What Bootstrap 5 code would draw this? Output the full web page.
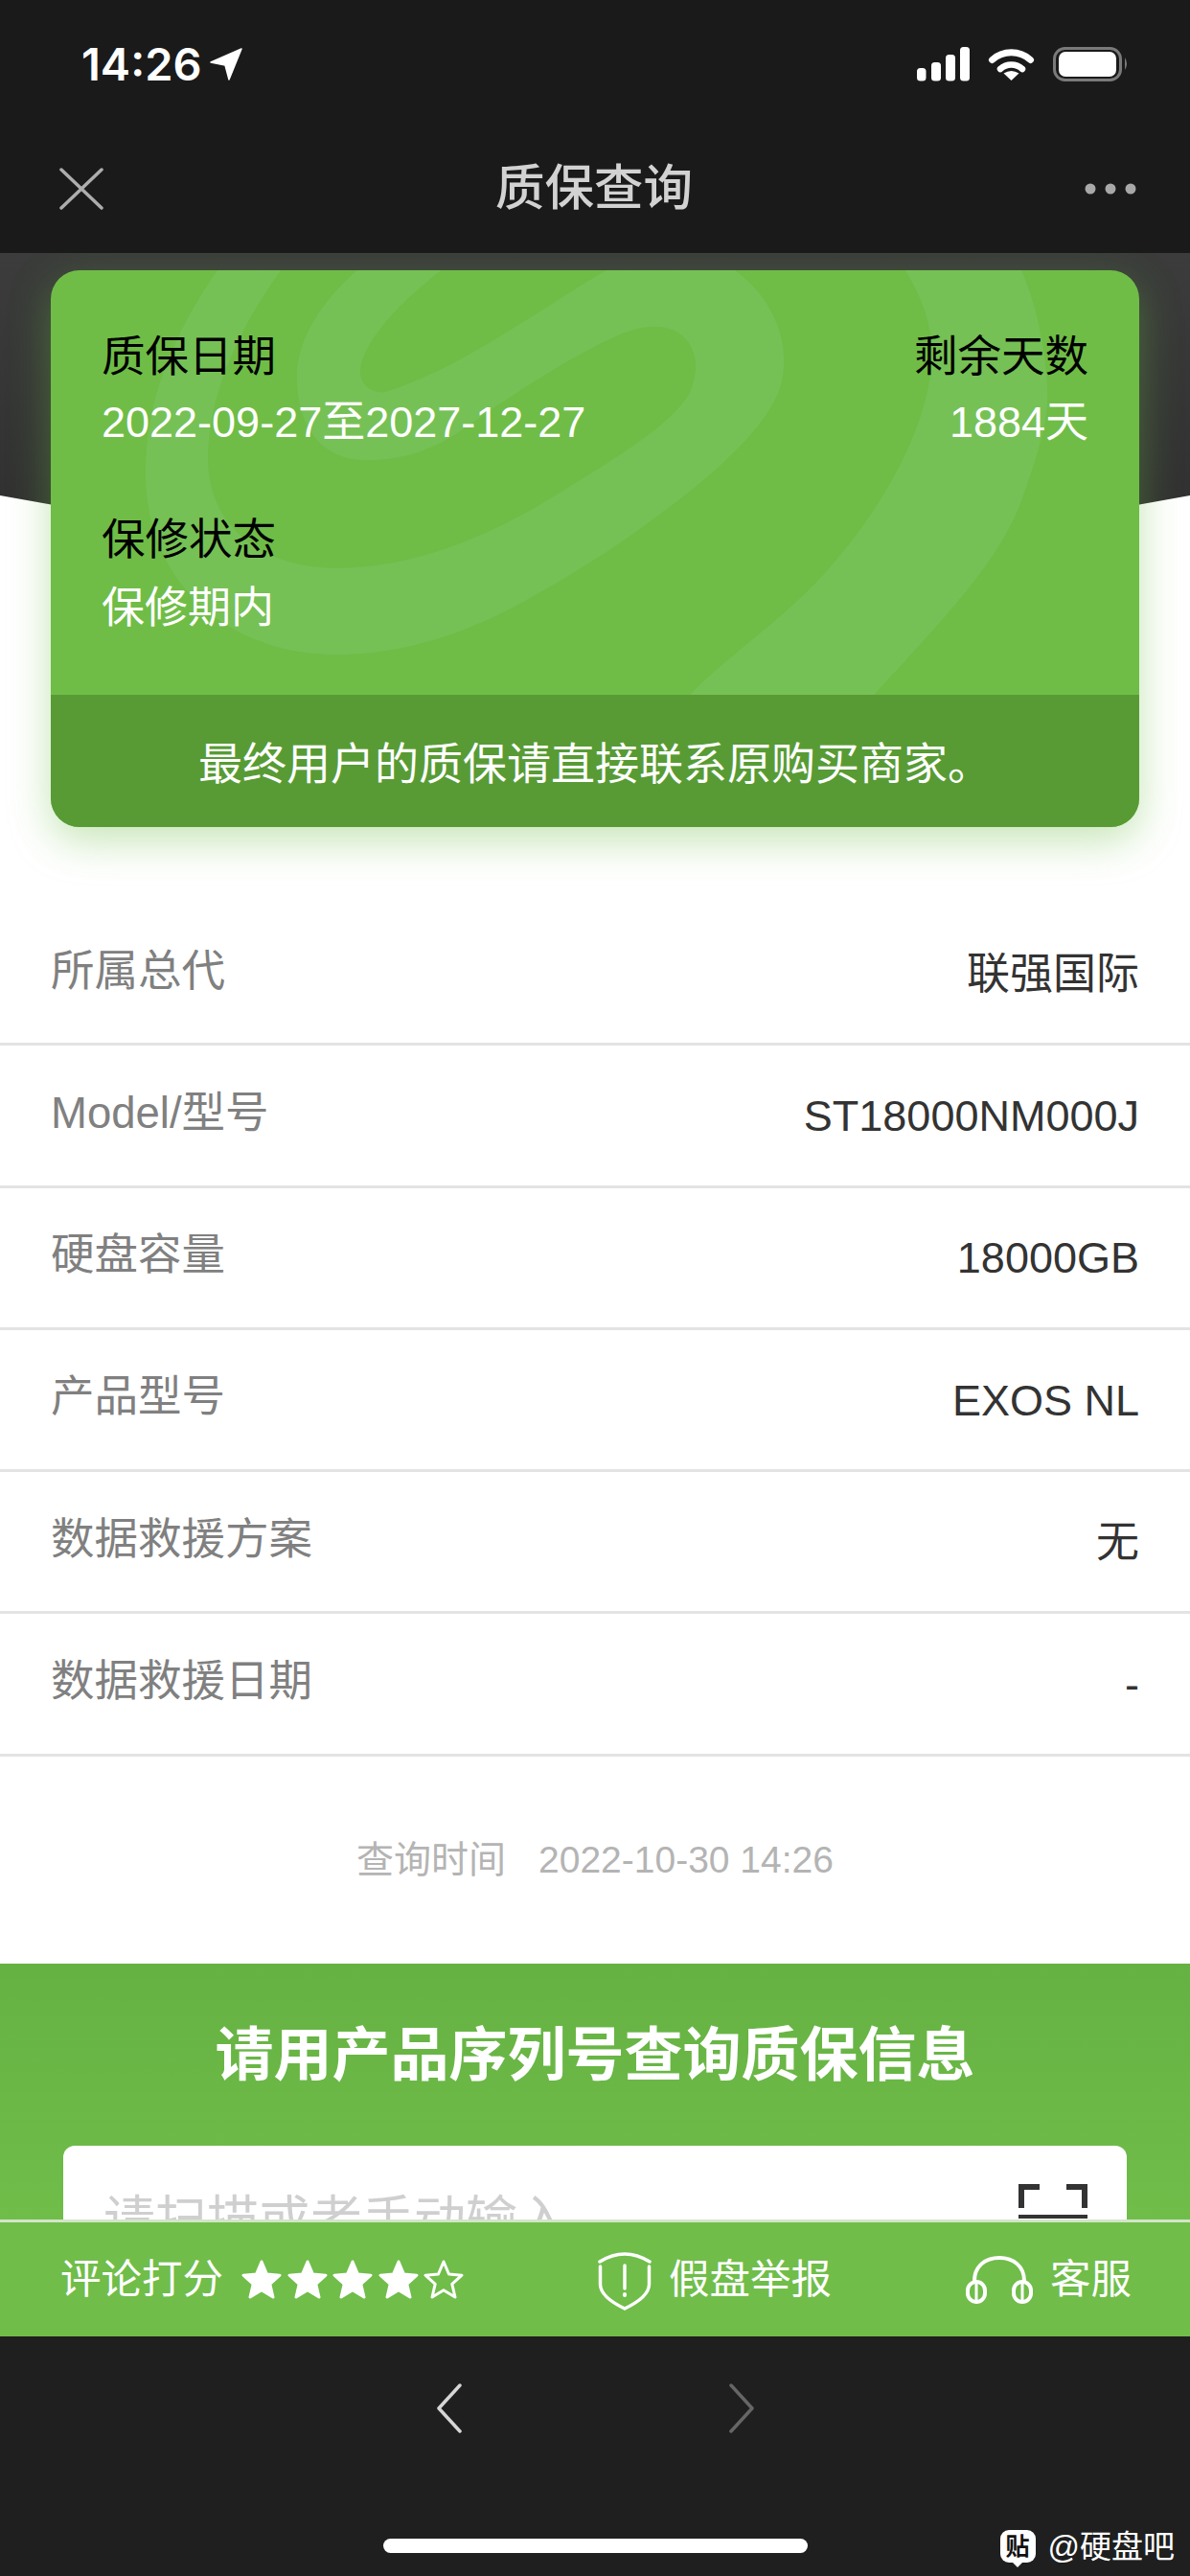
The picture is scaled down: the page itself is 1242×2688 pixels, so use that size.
<!DOCTYPE html>
<html lang="zh-CN">

<head>
    <meta charset="UTF-8" />
    <meta name="viewport" content="width=device-width, initial-scale=1" />
    <title>质保查询</title>
    <link href="https://cdn.jsdelivr.net/npm/bootstrap@5.3.2/dist/css/bootstrap.min.css" rel="stylesheet" />
    <style>
        :root {
            --cn-font: "Liberation Sans", "Noto Sans CJK SC", sans-serif;
            --green: #6fbd47;
        }

        body {
            background: #fff;
            font-family: var(--cn-font);
            margin: 0;
        }

        .phone {
            width: 1242px;
            height: 2688px;
            overflow: hidden;
        }

        .status-area {
            height: 130px;
            padding: 3px 64px 0 85px;
            background: #1a1a1a;
            color: #fff;
        }

        .clock {
            font: 600 47px/1 Inter, sans-serif;
        }

        .title-area {
            height: 134px;
            padding: 0 56px 0 62px;
            background: #1a1a1a;
        }

        .title-text {
            color: #d2d2d2;
            font-size: 51.5px;
            font-weight: 500;
            line-height: 1;
        }

        .content-area {
            position: relative;
            flex: 1 1 0;
            min-height: 0;
            overflow: hidden;
        }

        .hero-shape {
            position: absolute;
            top: 0;
            left: 0;
        }

        .hero {
            position: relative;
            padding: 18px 53px 0;
        }

        .warranty-card {
            height: 581px;
            border: 0;
            border-radius: 30px;
            overflow: hidden;
            background: var(--green);
            box-shadow: 0 14px 44px rgba(111, 189, 71, .4);
            --bs-card-bg: var(--green);
        }

        .warranty-top {
            position: relative;
            height: 443px;
            padding: 55px 53px 0;
            font-size: 45.5px;
            line-height: 71px;
        }

        .swirl {
            position: absolute;
            inset: 0;
        }

        .warranty-cols {
            position: relative;
        }

        .warranty-cols .cap {
            color: #000;
        }

        .warranty-cols .val {
            color: #fff;
            font-size: 45px;
        }

        .warranty-cols.d-flex .val {
            margin-top: -3px;
        }

        .status-block {
            margin-top: 52px;
        }

        .warranty-note {
            height: 138px;
            padding-top: 6px;
            background: #589b35;
            color: #fff;
            font-size: 46px;
        }

        .info-list {
            margin-top: 80px;
        }

        .info-row {
            height: 148.3px;
            padding: 0 53px;
            border-bottom: 3px solid #e3e3e3 !important;
            font-size: 45px;
        }

        .info-row .name {
            color: #808080;
            font-size: 45.5px;
            margin-top: -4px;
        }

        .info-row .data {
            color: #333;
            margin-top: 2px;
        }

        .query-time {
            height: 216px;
            color: #b4b4b4;
            font-size: 39px;
            gap: 34px;
        }

        .lookup {
            height: 500px;
            padding: 62px 66px 0;
            background: linear-gradient(#65b243, #70bd4a 270px);
        }

        .lookup-title {
            margin: 0 0 60px;
            color: #fff;
            font-size: 61px;
            font-weight: 700;
            line-height: 68px;
            font-family: var(--cn-font);
        }

        .lookup-box {
            height: 240px;
            padding: 40px 41px 0 42px;
            background: #fff;
            border-radius: 12px;
        }

        .lookup-box .form-control {
            height: 66px;
            margin-top: 6px;
            padding: 0;
            font-size: 54px;
            font-family: var(--cn-font);
            border: 0;
            box-shadow: none;
        }

        .lookup-box .form-control::placeholder {
            color: #cfcfcf;
        }

        .action-bar {
            height: 122px;
            padding: 0 61px 0 63px;
            border-top: 3px solid #d3e4c8;
            background: #70bd4a;
            color: #fff;
            font-size: 42.5px;
        }

        .action-item {
            gap: 18px;
        }

        .stars {
            gap: 5.5px;
            margin-left: 19px;
        }

        .toolbar {
            position: relative;
            height: 250px;
            padding: 49px 0 24px;
            background: #1f1f1f;
        }

        .chevrons {
            gap: 279px;
        }

        .home-bar {
            width: 443px;
            height: 15px;
            margin-top: auto;
            border-radius: 8px;
            background: #fff;
        }

        .watermark {
            position: absolute;
            right: 16px;
            bottom: 14px;
            gap: 13px;
            color: #fff;
            font-size: 33px;
            line-height: 1;
        }

        .tie-icon {
            position: relative;
            width: 37px;
            height: 34px;
            border-radius: 9px;
            background: #fff;
            color: #111;
            font-size: 25px;
            font-weight: 700;
        }

        .tie-icon::after {
            content: "";
            position: absolute;
            left: 12px;
            bottom: -5px;
            border-left: 6px solid transparent;
            border-right: 6px solid transparent;
            border-top: 6px solid #fff;
        }
    </style>
</head>

<body>
    <div class="phone d-flex flex-column">

        <!-- status bar -->
        <div class="status-area d-flex justify-content-between align-items-center">
            <div class="d-flex align-items-center gap-2">
                <span class="clock">14:26</span>
                <svg width="34" height="34" viewBox="0 0 34 34">
                    <path d="M33 1 L1 15 L16 18 L20 33 Z" fill="#fff" stroke="#fff" stroke-width="1.5" stroke-linejoin="round" />
                </svg>
            </div>
            <svg width="221" height="36" viewBox="957 50 221 36">
                <rect x="957" y="72" width="9.5" height="13.5" rx="3.5" fill="#fff" />
                <rect x="972" y="66" width="10" height="19.5" rx="3.5" fill="#fff" />
                <rect x="987" y="58" width="10" height="27.5" rx="3.5" fill="#fff" />
                <rect x="1002" y="50" width="10" height="35.5" rx="3.5" fill="#fff" />
                <path d="M1035.500 63.500 A 30 30 0 0 1 1075.500 63.500" fill="none" stroke="#fff" stroke-width="7" stroke-linecap="round" />
                <path d="M1044 73 A 17 17 0 0 1 1067 73" fill="none" stroke="#fff" stroke-width="6.500" stroke-linecap="round" />
                <path d="M1055.500 85 L1047.500 77.500 Q1055.500 72.500 1063.500 77.500 Z" fill="#fff" />
                <rect x="1100.500" y="51.500" width="69" height="33" rx="11" fill="none" stroke="#7a7a7a" stroke-width="3" />
                <rect x="1105" y="55" width="60" height="26" rx="7" fill="#fff" />
                <path d="M1174 61 Q1178 67.500 1174 74 Z" fill="#7a7a7a" />
            </svg>
        </div>

        <!-- title bar -->
        <div class="title-area d-flex justify-content-between align-items-center">
            <svg width="46" height="44" viewBox="0 0 46 44">
                <path d="M2 2 L44 42 M44 2 L2 42" stroke="#adadad" stroke-width="3.500" stroke-linecap="round" />
            </svg>
            <div class="title-text">质保查询</div>
            <svg width="54" height="12" viewBox="0 0 54 12" fill="#a8a8a8">
                <circle cx="6" cy="6" r="5.500" />
                <circle cx="27" cy="6" r="5.500" />
                <circle cx="48" cy="6" r="5.500" />
            </svg>
        </div>

        <div class="content-area">
            <svg class="hero-shape" width="1242" height="400" viewBox="0 0 1242 400">
                <defs>
                    <linearGradient id="heroFill" x1="0" y1="0" x2="0" y2="1">
                        <stop offset="0" stop-color="#3b3c3b" />
                        <stop offset="1" stop-color="#2f2f2f" />
                    </linearGradient>
                </defs>
                <path d="M0 0 H1242 V253 Q621 370 0 253 Z" fill="url(#heroFill)" />
            </svg>

            <div class="hero">
                <div class="card warranty-card">
                    <div class="warranty-top">
                        <svg class="swirl" width="1136" height="443" viewBox="53 282 1136 443">
                            <path fill="#76c155"
                                d="M227 282 C180 350 152 420 152 493 C152 610 240 683 350 683 C430 683 500 655 560 620
                                   C610 592 655 562 693 533 C745 495 795 450 812 410 C826 375 818 320 767 282
                                   L633 282 C560 325 480 385 403 409 C385 412 372 398 377 379 C387 345 425 310 460 282
                                   L373 282 C335 315 310 355 310 393 C310 445 335 480 383 480 C420 480 450 470 480 450
                                   C530 415 590 375 640 352 C665 340 695 335 712 350 C728 364 730 385 720 410
                                   C700 445 640 480 570 523 C500 565 425 593 350 593 C275 593 217 550 217 480
                                   C217 405 255 335 293 282 Z" />
                            <path fill="#76c155"
                                d="M945 282 C965 315 975 345 972 380 C970 430 935 520 850 610
                                   C805 655 760 685 720 725 L912 725 C980 650 1040 590 1065 525 C1085 470 1095 435 1093 403
                                   C1090 355 1080 315 1066 282 Z" />
                        </svg>
                        <div class="warranty-cols d-flex justify-content-between">
                            <div>
                                <div class="cap">质保日期</div>
                                <div class="val">2022-09-27至2027-12-27</div>
                            </div>
                            <div class="text-end">
                                <div class="cap">剩余天数</div>
                                <div class="val">1884天</div>
                            </div>
                        </div>
                        <div class="warranty-cols status-block">
                            <div class="cap">保修状态</div>
                            <div class="val">保修期内</div>
                        </div>
                    </div>
                    <div class="warranty-note d-flex align-items-center justify-content-center">最终用户的质保请直接联系原购买商家。</div>
                </div>
            </div>

            <ul class="list-group list-group-flush info-list" id="infoList"></ul>

            <div class="query-time d-flex align-items-center justify-content-center">
                <span>查询时间</span><span>2022-10-30 14:26</span>
            </div>

            <div class="lookup">
                <h2 class="lookup-title text-center">请用产品序列号查询质保信息</h2>
                <div class="lookup-box d-flex align-items-start justify-content-between">
                    <input class="form-control" type="text" placeholder="请扫描或者手动输入" />
                    <svg class="flex-shrink-0" width="72" height="36" viewBox="0 0 72 36">
                        <path d="M3 25 V3 H22 M50 3 H69 V25" fill="none" stroke="#333" stroke-width="6" />
                        <path d="M0 35 H72" stroke="#333" stroke-width="6" />
                    </svg>
                </div>
            </div>
        </div>

        <!-- bottom actions -->
        <div class="action-bar d-flex justify-content-between align-items-center flex-shrink-0">
            <div class="d-flex align-items-center">
                <span>评论打分</span>
                <div class="stars d-flex" id="stars"></div>
            </div>
            <div class="action-item d-flex align-items-center">
                <svg width="56" height="64" viewBox="0 0 56 64" fill="none" stroke="#fff" stroke-width="3.500" stroke-linecap="round">
                    <path d="M2 13 Q28 -3 54 13" />
                    <path d="M2.500 18 V37 Q3 50 28 62 Q53 50 53.500 37 V18" />
                    <path d="M28 17 V41" />
                    <path d="M28 47 V48" stroke-width="4" />
                </svg>
                <span>假盘举报</span>
            </div>
            <div class="action-item d-flex align-items-center">
                <svg width="70" height="50" viewBox="0 0 70 50" fill="none" stroke="#fff" stroke-width="4">
                    <path d="M9 29 V26 C9 11 20 2 35 2 C50 2 61 11 61 26 V29" />
                    <rect x="2" y="27" width="18" height="21" rx="9" />
                    <rect x="50" y="27" width="18" height="21" rx="9" />
                    <path d="M11 29 V46 M59 29 V46" stroke-width="3" />
                </svg>
                <span>客服</span>
            </div>
        </div>

        <!-- browser toolbar -->
        <div class="toolbar d-flex flex-column align-items-center flex-shrink-0">
            <div class="chevrons d-flex">
                <svg width="26" height="52" viewBox="0 0 26 52" fill="none" stroke="#d6d6d6" stroke-width="3.500" stroke-linecap="round" stroke-linejoin="round">
                    <path d="M24 2 L2 26 L24 50" />
                </svg>
                <svg width="26" height="52" viewBox="0 0 26 52" fill="none" stroke="#666" stroke-width="3.500" stroke-linecap="round" stroke-linejoin="round">
                    <path d="M2 2 L24 26 L2 50" />
                </svg>
            </div>
            <div class="home-bar"></div>
            <div class="watermark d-flex align-items-center">
                <span class="tie-icon d-flex align-items-center justify-content-center">贴</span>
                <span>@硬盘吧</span>
            </div>
        </div>
    </div>

    <script src="https://cdn.jsdelivr.net/npm/bootstrap@5.3.2/dist/js/bootstrap.bundle.min.js"></script>
    <script>
        const infoRows = [
            ["所属总代", "联强国际"],
            ["Model/型号", "ST18000NM000J"],
            ["硬盘容量", "18000GB"],
            ["产品型号", "EXOS NL"],
            ["数据救援方案", "无"],
            ["数据救援日期", "-"]
        ];

        const listEl = document.getElementById("infoList");
        infoRows.forEach(([name, data]) => {
            const li = document.createElement("li");
            li.className = "list-group-item info-row d-flex justify-content-between align-items-center";
            li.innerHTML = `<span class="name">${name}</span><span class="data">${data}</span>`;
            listEl.appendChild(li);
        });

        const starPoints = "21,2 26.500,15 40,16.200 29.800,25.300 33,39 21,31.800 9,39 12.200,25.300 2,16.200 15.500,15";
        const starsEl = document.getElementById("stars");
        for (let i = 0; i < 5; i++) {
            const fill = i < 4 ? "#fff" : "none";
            starsEl.insertAdjacentHTML("beforeend",
                `<svg width="42" height="41" viewBox="0 0 42 41"><polygon points="${starPoints}" fill="${fill}" stroke="#fff" stroke-width="3" stroke-linejoin="round"/></svg>`);
        }
    </script>
</body>

</html>
